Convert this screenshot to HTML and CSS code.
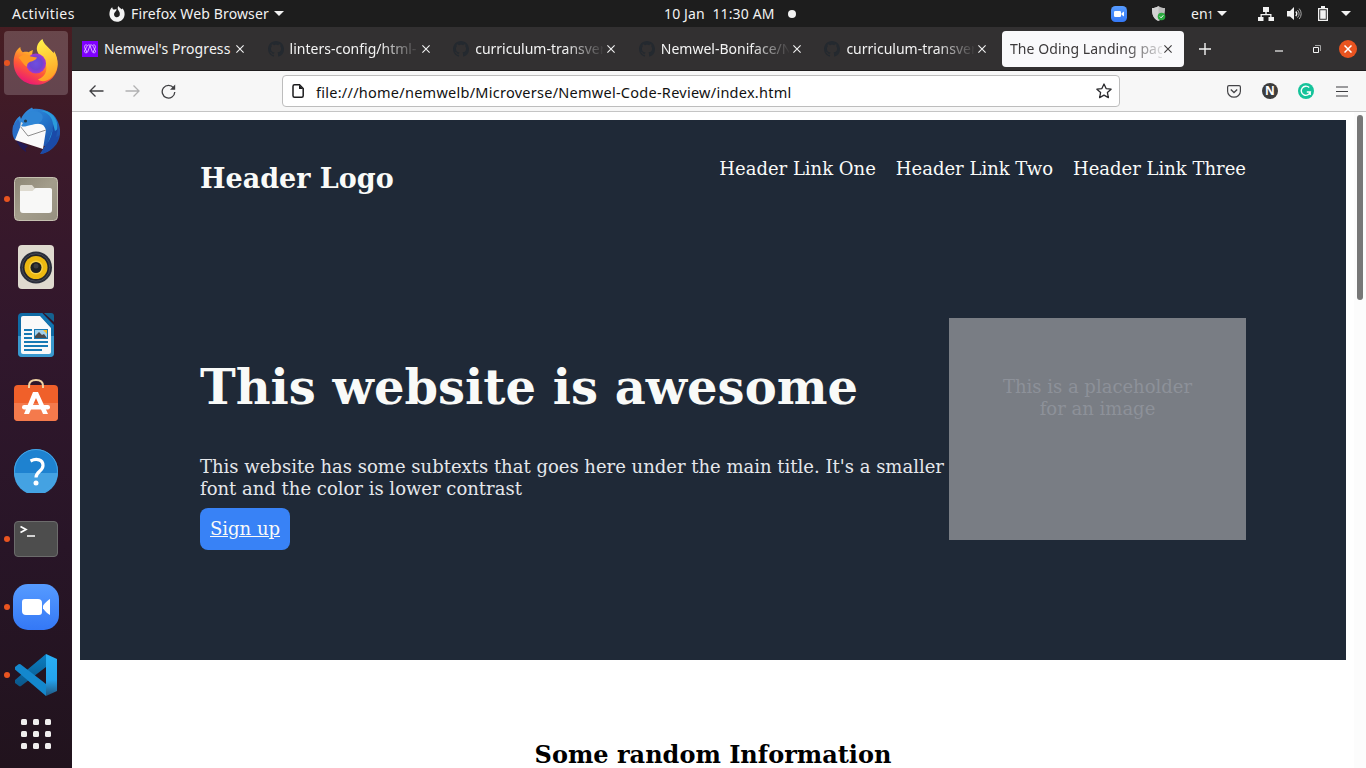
FILE: index.html
```html
<!DOCTYPE html>
<html lang="en">
<head>
<meta charset="utf-8">
<title>The Oding Landing page</title>
<link rel="stylesheet" href="styles.css">
</head>
<body>
<svg class="defs" width="0" height="0">
  <defs>
    <symbol id="github" viewBox="0 0 16 16"><path fill="#24292f" fill-rule="evenodd" d="M8 0C3.58 0 0 3.58 0 8c0 3.54 2.29 6.53 5.47 7.59.4.07.55-.17.55-.38 0-.19-.01-.82-.01-1.49-2.01.37-2.53-.49-2.69-.94-.09-.23-.48-.94-.82-1.13-.28-.15-.68-.52-.01-.53.63-.01 1.08.58 1.23.82.72 1.21 1.87.87 2.33.66.07-.52.28-.87.51-1.07-1.78-.2-3.64-.89-3.64-3.95 0-.87.31-1.59.82-2.15-.08-.2-.36-1.02.08-2.12 0 0 .67-.21 2.2.82.64-.18 1.32-.27 2-.27s1.36.09 2 .27c1.53-1.04 2.2-.82 2.2-.82.44 1.1.16 1.92.08 2.12.51.56.82 1.27.82 2.15 0 3.07-1.87 3.75-3.65 3.95.29.25.54.73.54 1.48 0 1.07-.01 1.93-.01 2.2 0 .21.15.46.55.38A8.01 8.01 0 0 0 16 8c0-4.42-3.58-8-8-8z"/></symbol>
    <symbol id="close" viewBox="0 0 8 8"><path d="M.4.4l7.2 7.2M7.6.4L.4 7.6" stroke="currentColor" stroke-width="1.1" fill="none"/></symbol>
    <symbol id="caret" viewBox="0 0 10 5"><path d="M0 0h10L5 5z" fill="#f2f2f2"/></symbol>
    <linearGradient id="gz" x1="0" y1="0" x2="0" y2="1"><stop offset="0" stop-color="#569bff"/><stop offset="1" stop-color="#3478f6"/></linearGradient>
    <linearGradient id="gff" x1=".8" y1="0" x2=".3" y2="1"><stop offset="0" stop-color="#fff44f"/><stop offset=".35" stop-color="#ffb02a"/><stop offset=".65" stop-color="#ff5a36"/><stop offset="1" stop-color="#e8127a"/></linearGradient>
    <linearGradient id="gfy" x1=".3" y1="0" x2=".5" y2="1"><stop offset="0" stop-color="#fff14a"/><stop offset="1" stop-color="#ff9e24"/></linearGradient>
    <radialGradient id="gfp"><stop offset="0" stop-color="#6f4ee0"/><stop offset=".6" stop-color="#6d45d2"/><stop offset="1" stop-color="#a636cf"/></radialGradient>
    <linearGradient id="gtb" x1="0" y1="0" x2="1" y2="1"><stop offset="0" stop-color="#3b96e4"/><stop offset=".5" stop-color="#2273c9"/><stop offset="1" stop-color="#1b3d9a"/></linearGradient>
    <linearGradient id="gfl" x1="0" y1="0" x2="1" y2="1"><stop offset="0" stop-color="#8d8675"/><stop offset=".5" stop-color="#a39d8b"/><stop offset="1" stop-color="#969080"/></linearGradient>
    <linearGradient id="gvs" x1="0" y1="0" x2="0" y2="1"><stop offset="0" stop-color="#29b0f5"/><stop offset=".62" stop-color="#24a2ec"/><stop offset="1" stop-color="#20567f"/></linearGradient>
    <linearGradient id="gvd" x1="0" y1="0" x2="0" y2="1"><stop offset="0" stop-color="#0a7fc4"/><stop offset="1" stop-color="#0b5688"/></linearGradient>
  </defs>
</svg>
<div class="desktop">
  <div class="topbar">
    <span class="t activities">Activities</span>
    <svg class="appicon" width="16" height="16" viewBox="0 0 16 16"><path fill="#f2f2f2" d="M1 4.6C1.4 3 2.4 2 3.3 1.3c0 1 .4 1.6 1 2.1h1.800L7.500 2.800 7.300 4.600 5.700 6.500A2.900 2.900 0 1 0 10.800 8c.1-1.600-.7-2.700-1.500-3.700C8.600 3.200 8.400 1.500 9.300 0c.8 1.600 2.200 2 3.400 3.300.4-.1.500-.5.500-1C15 4 15.700 6 15.600 8.400 15.400 12.500 12 15.800 8 15.800S.6 12.600.4 8.300C.4 7 .6 5.700 1 4.600z"/></svg>
    <span class="t appname">Firefox Web Browser</span>
    <svg class="appcaret" width="10" height="5"><use href="#caret"/></svg>
    <span class="t clock">10 Jan&nbsp; 11:30 AM</span>
    <i class="notice"></i>
    <svg class="tzoom" width="16" height="16" viewBox="0 0 16 16"><rect width="16" height="16" rx="4.500" fill="url(#gz)"/><rect x="3" y="5" width="7" height="6" rx="1.300" fill="#fff"/><path d="M10.500 7.200L13 5.400v5.200l-2.500-1.800z" fill="#fff"/></svg>
    <svg class="tshield" width="15" height="16" viewBox="0 0 15 16"><path d="M6.500 0c2 1.400 4 2 6.500 2 0 6-.8 10.500-6.500 13C.8 12.500 0 8 0 2c2.500 0 4.500-.6 6.500-2z" fill="#bdbdbd"/><path d="M6.500 0v15C.8 12.500 0 8 0 2c2.500 0 4.500-.6 6.500-2z" fill="#d2d2d2"/><circle cx="9.500" cy="10.500" r="3.800" fill="#2aab3f"/><path d="M7.800 10.500l1.300 1.300 2.200-2.500" stroke="#fff" stroke-width="1" fill="none"/></svg>
    <span class="t lang">en<small>1</small></span>
    <svg class="langcaret" width="10" height="5"><use href="#caret"/></svg>
    <svg class="tnet" width="16" height="14" viewBox="0 0 16 14"><path fill="#f2f2f2" d="M5 0h6v5H8.700v2h4.800v3H16v4h-5.500v-4h1.700V8.300H3.800V10h1.700v4H0v-4h2.500V7h4.800V5H5z"/></svg>
    <svg class="tvol" width="15" height="14" viewBox="0 0 15 14"><path fill="#f2f2f2" d="M0 4h3l4-4v13L3 9.500H0z"/><path d="M8.800 4.500q2 2.300 0 4.600" stroke="#f2f2f2" stroke-width="1.300" fill="none"/><path d="M10.500 3q3.300 3.800 0 7.600M12.200 1.600q4 5.200 0 10.400" stroke="#aaa" fill="none"/></svg>
    <svg class="tbat" width="10" height="15" viewBox="0 0 10 15"><path d="M3 0h4v2h3v13H0V2h3z" fill="#f2f2f2"/><path d="M1.300 3.300h7.400v10.400H1.300z" fill="#1d1d1d"/><path d="M2.200 4.200h5.600v8.600H2.200z" fill="#f2f2f2"/></svg>
    <svg class="syscaret" width="10" height="5"><use href="#caret"/></svg>
  </div>
  <div class="main">
    <div class="dock">
      <div class="slot run current"><svg width="46" height="48" viewBox="0 0 46 48"><path fill="url(#gff)" d="M2 15c.8-3 2.600-5 5.300-7 .1 2.500 1 4 2.500 5.300 2-.5 4-.6 5.800-.1 1.200-1 2.600-1.700 4.300-2.200L19 16l9 2V4C33 8 40 11 43.500 19c3.400 9.500-1 21-12 25.300-11 4.300-24-.5-29-11.500C.2 27.600 0 20.500 2 15z"/><path fill="url(#gfy)" d="M29.500 0c1 5.500 7 8.500 11 14.500l.5-2.500c5 7.500 5 19-2 26-5 5-11 5-14 2.500 9-3 11-13 5-20-5-6-7.500-9-5.500-14.500 1-2.500 2.600-4.500 5-6z"/><circle cx="23" cy="24.500" r="10" fill="url(#gfp)"/><path fill="#ff9a24" d="M5.500 18.500c5-4.500 9-3.500 12-1 2 .6 4 .5 6.500 1-1 2.600-4 3.500-6.800 4.300-2.700 1-3.500 3.200-3 5-3-1-5-5.300-8.700-9.300z"/></svg></div>
      <div class="slot"><svg width="48" height="48" viewBox="0 0 48 48"><path fill="url(#gtb)" d="M9 12C12 5 17 2 20 .5l1 1.500C31 1 41 5 45 13c5 9 4 20-3 27-4 4-9 7-14 7l5-8L3 32C-1 24 1 14 8 9z"/><path fill="#2b9bdb" d="M29 4c9 2 13 9 12 18l-7 19c8-5 12-14 11-25C43 8 36 3 29 4z"/><path fill="#1a4aa8" d="M41 17l2 7 3-2-2 8 3-1c-2 9-9 16-18 18l5-9c5-6 7-13 7-21z"/><path fill="#2a6fc8" d="M1 19l5-7 3 6-6 15C0 29 0 24 1 19z"/><path fill="#231a55" d="M4 33l12 6-3 3q2 2 1 3C9 42 6 38 4 33z"/><path fill="#fafafa" d="M3 33L9 18q9-3 19-1 4 0 6 6l-3 19z"/><path d="M8 19l8 10 18-6" fill="none" stroke="#8d8d8d" stroke-width="1"/><path d="M8 18C9 9 15 4 23 4c7 1 9 5 7 9-2 4-7 4-11 5-5 1-8 3-11 0z" fill="#2f86d6"/><circle cx="13.500" cy="14" r="1.600" fill="#253a4b"/><path d="M11 16l-3 5 1-6z" fill="#d8dce0"/></svg></div>
      <div class="slot run"><svg width="44" height="44" viewBox="0 0 44 44"><rect x=".5" y=".5" width="43" height="43" rx="4" fill="url(#gfl)" stroke="#c6c1b1"/><path fill="#dedacf" d="M6 9.500Q6 8 7.500 8H18l3 3.500h15q2 0 2 2v5H6z"/><path fill="#f8f8f7" d="M6 14h12.500l3-3H36q2 0 2 2v20q0 3-3 3H9q-3 0-3-3z"/></svg></div>
      <div class="slot"><svg width="36" height="44" viewBox="0 0 36 44"><rect width="36" height="44" rx="4" fill="#dfdacf"/><circle cx="18" cy="22.500" r="16" fill="#2a2e3a"/><circle cx="18" cy="22.500" r="13.800" fill="#24252a" stroke="#474b57"/><circle cx="18" cy="22.500" r="11.500" fill="#edb911"/><circle cx="18" cy="22.500" r="7" fill="#f6cf45"/><circle cx="18" cy="22.500" r="5.500" fill="#1e1f22"/><circle cx="18" cy="21" r="2.500" fill="#3b3c40"/></svg></div>
      <div class="slot"><svg width="36" height="44" viewBox="0 0 36 44"><path d="M4 0h20l12 12v28q0 4-4 4H4q-4 0-4-4V4q0-4 4-4z" fill="#0f6ba5"/><path d="M0 23h36v17q0 4-4 4H4q-4 0-4-4z" fill="#3998ce"/><path d="M5 3h17l11 12v24q0 2-2 2H5q-2 0-2-2V5q0-2 2-2z" fill="#f9f9f9"/><path d="M26 0h7q3 0 3 3v6z" fill="#15618f"/><path d="M22 2l13 14V12L24 0z" fill="#1275b2"/><path d="M6 17h8M6 21h8M6 25h8M6 29h24M6 33h24M6 37h18" stroke="#1779b4" stroke-width="2"/><rect x="16.500" y="16.500" width="13" height="9" fill="#a0d0ec" stroke="#1779b4"/><path d="M17 25v-2l4-4 3 3 2-1 3 4z" fill="#4a4a4a"/><path d="M25 17h4v4z" fill="#f6be27"/></svg></div>
      <div class="slot store"><svg width="44" height="42" viewBox="0 0 44 42"><rect y="6" width="44" height="36" rx="4" fill="#f0602a"/><path d="M0 24h44v14q0 4-4 4H4q-4 0-4-4z" fill="#f47a4c"/><path d="M15 9V7q0-6 7-6t7 6v2" fill="none" stroke="#f0d3a3" stroke-width="2"/><path d="M19 13h5l10 22h-5L22 19l-7 16h-5z" fill="#fff"/><rect x="8" y="26" width="28" height="4.500" rx="2.200" fill="#fff"/></svg></div>
      <div class="slot"><svg width="44" height="44" viewBox="0 0 44 44"><circle cx="22" cy="22" r="22" fill="#1e82d0"/><path d="M0 24a22 22 0 0 0 44 0z" fill="#44a2e2"/><circle cx="22" cy="22" r="21.500" fill="none" stroke="#46a5e5"/><path d="M16.500 12c6-3 12.500-1.500 12.500 4.500 0 5.500-7 6-7 12" fill="none" stroke="#fff" stroke-width="3.200"/><circle cx="22" cy="34" r="2.500" fill="#fff"/></svg></div>
      <div class="slot run"><svg width="44" height="36" viewBox="0 0 44 36"><rect x=".5" y=".5" width="43" height="35" rx="3.500" fill="#4d4d4d" stroke="#6c6c6c"/><path d="M6.500 5.500l5.500 3-5.500 3" fill="none" stroke="#fff" stroke-width="1.700"/><path d="M13 15h8" stroke="#fff" stroke-width="1.500"/></svg></div>
      <div class="slot run"><svg width="46" height="46" viewBox="0 0 46 46"><rect width="46" height="46" rx="15" fill="url(#gz)"/><path d="M12 15h13q4 0 4 4v9q0 3-3 3H13q-4 0-4-4v-9q0-3 3-3z" fill="#fff"/><path d="M30 21.500q4-5 7-6.500v16q-3-1.500-7-6.500z" fill="#fff"/></svg></div>
      <div class="slot run"><svg width="42" height="42" viewBox="0 0 42 42"><path d="M31 0v13L6 32q-1 .8-2 0l-4-3v-3z" fill="url(#gvd)"/><path d="M3.500 10.300q1-.8 2 0L31 30v12L0 15.500v-2.500z" fill="#1488cd"/><path d="M31 0l11 5v32l-11 5z" fill="url(#gvs)"/></svg></div>
      <div class="slot grid"><div class="apps"><i></i><i></i><i></i><i></i><i></i><i></i><i></i><i></i><i></i></div></div>
    </div>
    <div class="browser">
      <div class="tabs">
        <div class="tab"><svg width="16" height="16" viewBox="0 0 16 16"><rect width="16" height="16" fill="#7f00ff"/><path d="M5.300 4.500c-1.800-1.600-3.300.2-2.500 2.300L5 11.500M10.700 4.500c1.800-1.600 3.300.2 2.500 2.300L11 11.500M8 4.500C6.800 3 5 4.500 4.300 6.500L2.500 10c-.5 2 2.500 2.500 3.300.5L8 4.500c1.200-1.500 3 0 3.700 2l1.800 3.500c.5 2-2.500 2.500-3.300.5z" fill="none" stroke="#e3c4ff" stroke-width=".9"/></svg><span class="t title first">Nemwel's Progress</span><svg class="x" width="8" height="8"><use href="#close"/></svg></div>
        <div class="tab"><svg width="16" height="16"><use href="#github"/></svg><span class="t title fade">linters-config/html-</span><svg class="x" width="8" height="8"><use href="#close"/></svg></div>
        <div class="tab"><svg width="16" height="16"><use href="#github"/></svg><span class="t title fade">curriculum-transver</span><svg class="x" width="8" height="8"><use href="#close"/></svg></div>
        <div class="tab"><svg width="16" height="16"><use href="#github"/></svg><span class="t title fade">Nemwel-Boniface/N</span><svg class="x" width="8" height="8"><use href="#close"/></svg></div>
        <div class="tab"><svg width="16" height="16"><use href="#github"/></svg><span class="t title fade">curriculum-transver</span><svg class="x" width="8" height="8"><use href="#close"/></svg></div>
        <div class="tab active"><span class="t title fade">The Oding Landing pag</span><svg class="x" width="8" height="8"><use href="#close"/></svg></div>
        <svg class="plus" width="12" height="12"><path d="M6 0v12M0 6h12" stroke="#f3f3f3" stroke-width="1.400"/></svg>
        <svg class="min" width="8" height="2"><path d="M0 1h8" stroke="#f3f3f3" stroke-width="1.200"/></svg>
        <svg class="max" width="8" height="8"><path d="M.5 2.500h5v5h-5z" fill="none" stroke="#f3f3f3"/><path d="M2 .5h5.500V6" fill="none" stroke="#a5a5a5"/></svg>
        <span class="quit"><svg width="8" height="8"><path d="M.5.5l7 7M7.500.5l-7 7" stroke="#fff" stroke-width="1.500"/></svg></span>
      </div>
      <div class="toolbar">
        <svg class="back" width="15" height="12" viewBox="0 0 15 12"><path d="M14.500 6H1M6.500.5L1 6l5.500 5.500" fill="none" stroke="#3f3f42" stroke-width="1.300"/></svg>
        <svg class="fwd" width="15" height="12" viewBox="0 0 15 12"><path d="M.5 6H14M8.500.5L14 6l-5.500 5.500" fill="none" stroke="#b1b1b2" stroke-width="1.300"/></svg>
        <svg class="reload" width="15" height="15" viewBox="0 0 15 15"><path d="M12.600 4A6.300 6.300 0 1 0 13.800 8" fill="none" stroke="#3f3f42" stroke-width="1.300"/><path d="M14.200.6v5.200H9z" fill="#3f3f42"/></svg>
        <div class="url">
          <svg width="12" height="14" viewBox="0 0 12 14"><path d="M2.500.8h5l3.700 3.700v7.200q0 1.500-1.500 1.500H2.500Q1 13.200 1 11.700V2.300Q1 .8 2.500.8z" fill="none" stroke="#1b1b1d" stroke-width="1.500"/><path d="M7 1v4h4z" fill="#1b1b1d"/></svg>
          <span class="t addr">file:///home/nemwelb/Microverse/Nemwel-Code-Review/index.html</span>
          <svg class="star" width="16" height="16" viewBox="0 0 16 16"><path d="M8 1l2.100 4.600 5 .6-3.700 3.400 1 5L8 12.100 3.600 14.600l1-5L.9 6.200l5-.6z" fill="none" stroke="#2b2b2e" stroke-width="1.300" stroke-linejoin="round"/></svg>
        </div>
        <svg class="pocket" width="14" height="13" viewBox="0 0 14 13"><path d="M2 .6h10q1.400 0 1.400 1.400v4.200a6.400 6 0 0 1-12.800 0V2Q.6.600 2 .6z" fill="none" stroke="#444447" stroke-width="1.200"/><path d="M3.800 4.500L7 7.500l3.200-3" fill="none" stroke="#444447" stroke-width="1.300"/></svg>
        <span class="badge">N</span>
        <svg class="gram" width="16" height="16" viewBox="0 0 16 16"><circle cx="8" cy="8" r="8" fill="#15c39a"/><path d="M11.200 4.600A4.600 4.600 0 1 0 12.300 9H8.800M12.200 9v3" fill="none" stroke="#fff" stroke-width="1.400"/></svg>
        <svg class="burger" width="12" height="11"><path d="M0 1h12M0 5.500h12M0 10h12" stroke="#3f3f42" stroke-width="1.200"/></svg>
      </div>
      <div class="viewport">
        <div class="page">
          <div class="hero">
            <div class="head">
              <div class="logo">Header Logo</div>
              <div class="links"><span>Header Link One</span><span>Header Link Two</span><span>Header Link Three</span></div>
            </div>
            <div class="intro">
              <div class="copy">
                <h1>This website is awesome</h1>
                <p>This website has some subtexts that goes here under the main title. It's a smaller<br>font and the color is lower contrast</p>
                <a class="signup">Sign up</a>
              </div>
              <div class="placeholder">This is a placeholder<br>for an image</div>
            </div>
          </div>
          <h2>Some random Information</h2>
        </div>
        <div class="scroll"><i></i></div>
      </div>
    </div>
  </div>
</div>
</body>
</html>
```
FILE: styles.css
```css
* { box-sizing: border-box; }
body { margin: 0; width: 1366px; height: 768px; overflow: hidden; background: #fff; }
svg { display: block; flex: none; }
.defs { position: absolute; }
.desktop { width: 1366px; height: 768px; display: flex; flex-direction: column; overflow: hidden; }
.t { font-family: "Noto Sans", "Open Sans", sans-serif; font-size: 14px; line-height: 20px; white-space: nowrap; flex: none; }

.topbar { height: 27px; flex: none; background: #1d1d1d; color: #f2f2f2; display: flex; align-items: center; padding-left: 12px; }
.activities { width: 97px; letter-spacing: .45px; }
.appname { width: 138px; margin-left: 6px; letter-spacing: .13px; }
.appcaret { margin-left: 5px; }
.clock { width: 111px; margin-left: 380px; letter-spacing: .14px; }
.notice { width: 8px; height: 8px; border-radius: 50%; background: #f2f2f2; margin-left: 13px; }
.tzoom { margin-left: 315px; }
.tshield { margin-left: 25px; }
.lang { width: 22px; margin-left: 24px; padding-top: 1px; }
.lang small { font-size: 10px; line-height: 10px; }
.langcaret { margin-left: 4px; }
.tnet { margin-left: 31px; }
.tvol { margin-left: 13px; }
.tbat { margin-left: 16px; }
.syscaret { margin-left: 13px; }

.main { flex: 1; display: flex; min-height: 0; }
.dock { width: 72px; flex: none; padding-top: 2px; background: linear-gradient(180deg, #471d22 0, #3b192a 130px, #30172c 320px, #281527 520px, #21131d 741px); }
.slot { width: 72px; height: 68px; display: flex; align-items: center; justify-content: center; position: relative; }
.slot.current::after { content: ""; position: absolute; left: 4px; top: 2px; width: 64px; height: 64px; border-radius: 4px; background: rgba(255,255,255,.19); }
.slot svg { position: relative; z-index: 1; }
.slot.run::before { content: ""; position: absolute; z-index: 1; left: 4px; top: 31px; width: 6px; height: 6px; border-radius: 50%; background: #e95420; }
.store { padding-bottom: 6px; }
.grid { height: 50px; }
.apps { display: grid; grid-template-columns: repeat(3, 6px); gap: 6px; }
.apps i { width: 6px; height: 6px; border-radius: 1.5px; background: #f0eeee; }

.browser { flex: 1; min-width: 0; display: flex; flex-direction: column; }
.tabs { height: 44px; flex: none; background: #323031; border-bottom: 1px solid #1f1d1e; color: #f3f3f3; display: flex; align-items: center; padding-left: 2px; }
.tab { width: 185.6px; height: 36px; flex: none; display: flex; align-items: center; padding-left: 8px; }
.title { width: 128px; margin-left: 6px; padding-top: 1px; }
.title.first { letter-spacing: .08px; }
.fade { -webkit-mask-image: linear-gradient(90deg, #000 90px, transparent 130px); mask-image: linear-gradient(90deg, #000 90px, transparent 130px); }
.x { margin-left: 4px; }
.tab.active { width: 182px; background: #f9f9fb; color: #3c3a3b; border-radius: 4px; }
.active .title { width: 152px; margin-left: 0; letter-spacing: .08px; -webkit-mask-image: linear-gradient(90deg, #000 115px, transparent 158px); mask-image: linear-gradient(90deg, #000 115px, transparent 158px); }
.active .x { margin-left: 2px; }
.plus { margin-left: 15px; }
.min { margin: 4px 0 0 64px; }
.max { margin-left: 30px; }
.quit { width: 18px; height: 18px; border-radius: 50%; background: #e95420; display: flex; align-items: center; justify-content: center; margin-left: 21px; flex: none; margin-left: 18px; }

.toolbar { height: 41px; flex: none; background: #f7f7f7; border-bottom: 1px solid #c4c4c4; display: flex; align-items: center; padding-left: 17px; }
.fwd { margin-left: 21px; }
.reload { margin-left: 21px; }
.url { width: 838px; height: 32px; margin-left: 106px; border: 1px solid #bdbdbd; border-radius: 4px; background: #fff; display: flex; align-items: center; padding-left: 9px; color: #111; }
.addr { width: 780px; margin-left: 12px; font-size: 14.5px; letter-spacing: .26px; padding-top: 1px; }
.pocket { margin-left: 107px; }
.badge { width: 16px; height: 16px; border-radius: 50%; margin-left: 21px; background: #3d3d3d; color: #fff; font: bold 12px/16px "Open Sans", sans-serif; text-align: center; }
.gram { margin-left: 20px; }
.burger { margin-left: 22px; }

.viewport { flex: 1; min-height: 0; display: flex; background: #fff; font-family: "DejaVu Serif", serif; font-size: 18px; line-height: 22px; }
.page { width: 1282px; flex: none; padding: 8px 8px 0; overflow: hidden; }
.hero { height: 540px; background: #1f2937; padding: 38px 100px 0 120px; }
.head { display: flex; justify-content: space-between; height: 160px; color: #f9faf8; }
.logo { font-size: 27px; line-height: 42px; font-weight: bold; }
.links { display: flex; gap: 20px; }
.intro { display: flex; justify-content: space-between; }
.copy { width: 749px; padding-top: 36px; color: #e5e7eb; white-space: nowrap; }
h1 { margin: 0; font-size: 48px; line-height: 66px; color: #f9faf8; }
p { margin: 36px 0 8px; }
.signup { display: block; width: 90px; height: 42px; padding: 10px; border-radius: 8px; background: #3882f6; color: #f9faf8; text-decoration: underline; }
.placeholder { width: 297px; height: 222px; padding-top: 58px; background: #797d84; color: #8d9199; text-align: center; }
h2 { margin: 80px 0 0; font-size: 24px; line-height: 30px; text-align: center; color: #000; }
.scroll { width: 12px; background: #fcfcfc; padding: 3px 0 0 3px; }
.scroll i { display: block; width: 6px; height: 185px; border-radius: 3px; background: #777; }
```
